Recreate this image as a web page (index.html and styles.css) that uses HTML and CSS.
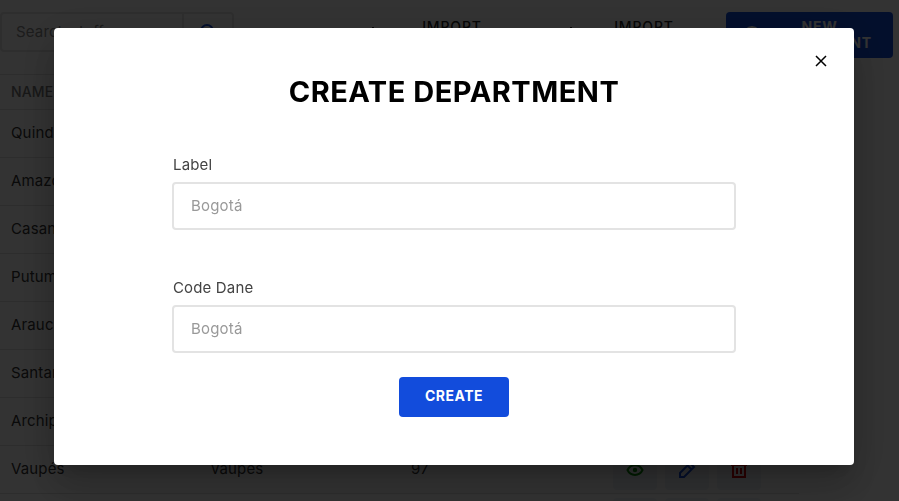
FILE: index.html
```html
<!DOCTYPE html>
<html lang="en">
<head>
<meta charset="utf-8">
<title>Departments</title>
<link rel="stylesheet" href="styles.css">
</head>
<body>
<main class="page">
  <header class="toolbar">
    <div class="search">
      <span class="search-text">Search stuff...</span>
      <span class="search-button"><svg width="20" height="20" viewBox="0 0 20 20" fill="none" stroke="#124cdc" stroke-width="2"><circle cx="9" cy="9" r="6"/><path d="M13.500 13.500l5 5"/></svg></span>
    </div>
    <div class="tool first"><svg width="16" height="16" viewBox="0 0 16 16" fill="none" stroke="#222" stroke-width="2"><path d="M8 0v11M3 6l5 5 5-5M1 15h14"/></svg><span>IMPORT</span></div>
    <div class="tool second"><svg width="16" height="16" viewBox="0 0 16 16" fill="none" stroke="#222" stroke-width="2"><path d="M8 0v11M3 6l5 5 5-5M1 15h14"/></svg><span>IMPORT</span></div>
    <div class="tool primary"><svg width="18" height="18" viewBox="0 0 18 18" fill="none" stroke="#fff" stroke-width="2"><circle cx="9" cy="9" r="8"/><path d="M9 5v8M5 9h8"/></svg><span>NEW DEPARTMENT</span></div>
  </header>
  <section class="table">
    <div class="row head"><span>NAME</span></div>
    <div class="row"><span>Quindío</span></div>
    <div class="row"><span>Amazonas</span></div>
    <div class="row"><span>Casanare</span></div>
    <div class="row"><span>Putumayo</span></div>
    <div class="row"><span>Arauca</span></div>
    <div class="row"><span>Santander</span></div>
    <div class="row"><span>Archipiélago</span></div>
    <div class="row"><span>Vaupés</span><span>vaupes</span><span>97</span>
      <div class="actions">
        <i><svg width="20" height="20" viewBox="0 0 20 20" fill="none" stroke="#008a00" stroke-width="2"><path d="M2.500 10C5.500 3.500 14.500 3.500 17.500 10C14.500 16.500 5.500 16.500 2.500 10z"/><circle cx="10" cy="10" r="2.200" fill="#008a00" stroke="none"/></svg></i>
        <i><svg width="20" height="20" viewBox="0 0 20 20" fill="none" stroke="#124cdc" stroke-width="2"><path d="M3 17v-4L13 3l4 4L7 17zM10.500 5.500l4 4"/></svg></i>
        <i><svg width="20" height="20" viewBox="0 0 20 20" fill="none" stroke="#d00000" stroke-width="2"><path d="M2 5h16M7 5V2h6v3M4 5v12h12V5M8 8v6M12 8v6"/></svg></i>
      </div>
    </div>
    <div class="row"><span></span><span></span><span></span><div class="actions"><i></i><i></i><i></i></div></div>
  </section>
</main>
<div class="overlay">
  <form class="modal">
    <button class="close" type="button" aria-label="Close"><svg width="12" height="12" viewBox="0 0 12 12" fill="none" stroke="#000" stroke-width="1.500"><path d="M1 1l10 10M11 1L1 11"/></svg></button>
    <h1>CREATE DEPARTMENT</h1>
    <label class="field"><span>Label</span><input placeholder="Bogotá"></label>
    <label class="field"><span>Code Dane</span><input placeholder="Bogotá"></label>
    <button class="create" type="button">CREATE</button>
  </form>
</div>
</body>
</html>
```
FILE: styles.css
```css
* { box-sizing: border-box; }
body {
  margin: 0;
  height: 501px;
  overflow: hidden;
  background: #fff;
  color: #333;
  font: 15px/20px Inter, "Liberation Sans", sans-serif;
  letter-spacing: .15px;
}
svg { display: block; flex: none; }
.page { height: 501px; overflow: hidden; padding-top: 12px; }
.toolbar { display: flex; height: 62px; align-items: flex-start; }
.search {
  display: flex;
  width: 234px;
  height: 40px;
  border: 2px solid #e3e3e3;
  border-radius: 4px;
  color: #8c8c8c;
}
.search-text { width: 182px; padding: 8px 0 0 14px; border-right: 2px solid #e3e3e3; }
.search-button { flex: 1; display: grid; place-items: center; }
.tool {
  display: flex;
  align-items: center;
  height: 46px;
  border-radius: 4px;
  color: #222;
  font-size: 14px;
  line-height: 16px;
  font-weight: 500;
  letter-spacing: .85px;
  text-align: center;
}
.tool span { flex: 1; }
.first { width: 184px; margin-left: 108px; padding: 0 8px 0 23px; }
.second { width: 184px; margin-left: 8px; padding: 0 8px 0 29px; }
.first span, .second span { height: 32px; }
.first span { padding-left: 5px; }
.second span { padding-right: 1px; }
.primary { width: 167px; margin-left: 8px; padding: 0 15px 0 17px; background: #124cdc; color: #fff; font-weight: 700; letter-spacing: .75px; }
.table { width: 799px; border-top: 1px solid #e0e0e0; }
.row {
  display: grid;
  grid-template-columns: 200px 200px 202px auto;
  align-items: center;
  height: 48px;
  padding-left: 11px;
  border-bottom: 1px solid #e0e0e0;
}
.row > span { margin-top: -2px; }
.head { height: 35px; color: #777; font-size: 14px; font-weight: 500; }
.head > span { margin-top: -1px; }
.actions { display: flex; gap: 8px; }
.actions i { width: 44px; height: 40px; display: grid; place-items: center; border-radius: 4px; background: #eef3f7; }
.overlay {
  position: fixed;
  inset: 0;
  display: flex;
  justify-content: center;
  align-items: flex-start;
  padding: 28px 0 0 9px;
  background: rgba(0, 0, 0, .8);
}
.modal {
  position: relative;
  display: flex;
  flex-direction: column;
  align-items: center;
  width: 800px;
  height: 437px;
  padding: 44px 118px 0;
  border-radius: 4px;
  background: #fff;
  box-shadow: 0 11px 15px -7px rgba(0, 0, 0, .2), 0 24px 38px 3px rgba(0, 0, 0, .14), 0 9px 46px 8px rgba(0, 0, 0, .12);
}
.close { position: absolute; top: 27px; right: 27px; padding: 0; border: 0; background: none; }
h1 { margin: 0 0 45px; color: #000; font-size: 29px; line-height: 40px; font-weight: 700; letter-spacing: .5px; white-space: nowrap; }
.field { display: block; width: 564px; height: 75px; margin-bottom: 48px; color: #444; }
.field span { display: block; height: 25px; padding-left: 1px; line-height: 16px; }
.field + .field { margin-bottom: 22px; }
.field input {
  display: block;
  width: 100%;
  height: 48px;
  padding: 0 17px 2px;
  border: 2px solid #e3e3e3;
  border-radius: 4px;
  outline: 0;
  background: #fff;
  font: inherit;
  letter-spacing: .2px;
}
.field input::placeholder { color: #999; opacity: 1; }
.create {
  width: 110px;
  height: 40px;
  padding: 0 0 2px;
  border: 0;
  border-radius: 4px;
  background: #124cdc;
  color: #fff;
  font: 700 14px/20px Inter, "Liberation Sans", sans-serif;
  letter-spacing: .5px;
}
```
